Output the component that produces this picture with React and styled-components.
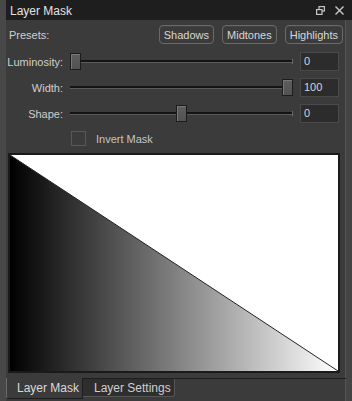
import React from "react";
import styled, { createGlobalStyle } from "styled-components";

const Global = createGlobalStyle`
  html, body { margin: 0; padding: 0; background: #3b3b3b; }
  body { font-family: "Liberation Sans", Arial, sans-serif; font-size: 11px; color: #cfcfcf; }
  * { box-sizing: border-box; }
`;

const Frame = styled.div`
  width: 352px;
  height: 401px;
  display: flex;
  flex-direction: column;
  background: #3b3b3b;
  border-left: 6px solid #484848;
  overflow: hidden;
`;

const TitleBar = styled.div`
  height: 20px;
  flex: none;
  display: flex;
  align-items: center;
  background: #1e1e1e;
  padding: 0 8px 0 4px;
  color: #e2e2e2;
  font-size: 12px;
`;

const Title = styled.div`
  flex: 1;
  padding-top: 1px;
`;

const TitleIcons = styled.div`
  display: flex;
  align-items: center;
  gap: 10px;
  color: #c4c4c4;
`;

const Body = styled.div`
  flex: 1;
  display: flex;
  flex-direction: column;
  border-right: 6px solid #444;
  box-shadow: inset -1px 0 0 #555;
`;

const PresetRow = styled.div`
  display: flex;
  align-items: center;
  height: 19px;
  margin-top: 5px;
  padding: 0 3px 0 3px;
  gap: 8px;
`;

const PresetLabel = styled.div`
  flex: 1;
  padding-top: 1px;
`;

const PresetButton = styled.div`
  height: 19px;
  padding: 0 4px;
  display: flex;
  align-items: center;
  border: 1px solid #6a6a6a;
  border-radius: 4px;
  color: #d8d8d8;
  font-size: 11px;
  box-shadow: inset 0 1px 0 rgba(255,255,255,0.04);
`;

const SliderRow = styled.div`
  display: flex;
  align-items: center;
  height: 19px;
  margin-top: ${(p) => p.$top}px;
  gap: 7px;
  padding-right: 7px;
`;

const RowLabel = styled.div`
  width: 57px;
  text-align: right;
  flex: none;
`;

const Track = styled.div`
  position: relative;
  flex: 1;
  height: 19px;
  &::before {
    content: "";
    position: absolute;
    left: 0;
    right: 0;
    top: 8px;
    height: 2px;
    background: #141414;
    border-bottom: 1px solid #5c5c5c;
    box-sizing: content-box;
  }
  &::after {
    content: "";
    position: absolute;
    right: 0;
    top: 7px;
    width: 1px;
    height: 5px;
    background: #6a6a6a;
  }
`;

const Thumb = styled.div`
  position: absolute;
  top: 1px;
  width: 11px;
  height: 17px;
  background: linear-gradient(#5e5e5e, #525252);
  border: 1px solid #1c1c1c;
  box-shadow: inset 1px 1px 0 #777;
  z-index: 1;
`;

const ValueBox = styled.div`
  width: 39px;
  height: 19px;
  flex: none;
  background: #2c2c2c;
  border: 1px solid #4a4a4a;
  padding: 2px 3px 0;
  color: #d4d4d4;
`;

const CheckRow = styled.div`
  display: flex;
  align-items: center;
  margin-top: 8px;
  padding-left: 65px;
  gap: 10px;
  height: 15px;
  color: #c4c4c4;
`;

const CheckBox = styled.div`
  width: 15px;
  height: 15px;
  border: 1px solid #575757;
  background: #3b3b3b;
`;

const Canvas = styled.div`
  margin: 7px 6px 0 2px;
  height: 220px;
  border: 2px solid #1a1a1a;
  background: #fff;
  display: flex;
`;

const TabBar = styled.div`
  display: flex;
  margin-top: 5px;
  height: 20px;
  border-top: 1px solid #1d1d1d;
`;

const Tab = styled.div`
  display: flex;
  align-items: center;
  font-size: 12px;
  ${(p) =>
    p.$active
      ? `
    width: 77px;
    height: 21px;
    margin-top: -1px;
    padding-left: 10px;
    background: #3b3b3b;
    border-left: 1px solid #6a6a6a;
    border-bottom: 1px solid #1d1d1d;
    border-right: 1px solid #1d1d1d;
    border-bottom-left-radius: 3px;
    color: #dadada;
  `
      : `
    width: 92px;
    height: 18px;
    padding-left: 11px;
    background: #2e2e2e;
    border-right: 1px solid #555;
    border-bottom: 1px solid #555;
    border-bottom-right-radius: 3px;
    color: #cfcfcf;
  `}
`;

function Slider({ pos }) {
  return (
    <Track>
      <Thumb style={{ left: `calc(${pos * 100}% - ${pos * 11}px)` }} />
    </Track>
  );
}

function MaskPreview() {
  return (
    <svg width="100%" height="100%" viewBox="0 0 328 216" preserveAspectRatio="none">
      <defs>
        <linearGradient id="g" x1="0" y1="0" x2="1" y2="0">
          <stop offset="0" stopColor="#000" />
          <stop offset="1" stopColor="#fff" />
        </linearGradient>
      </defs>
      <rect x="0" y="0" width="328" height="216" fill="#fff" />
      <polygon points="0,0 0,216 328,216" fill="url(#g)" />
      <line x1="0" y1="0" x2="328" y2="216" stroke="#222" strokeWidth="1" />
    </svg>
  );
}

export default function App() {
  return (
    <>
      <Global />
      <Frame>
        <TitleBar>
          <Title>Layer Mask</Title>
          <TitleIcons>
            <svg width="9" height="9" viewBox="0 0 9 9" fill="none" stroke="currentColor" strokeWidth="1.2">
              <rect x="3" y="0.6" width="5.4" height="4.4" />
              <rect x="0.6" y="3.6" width="5.4" height="4.8" fill="#1e1e1e" />
            </svg>
            <svg width="9" height="9" viewBox="0 0 9 9" stroke="currentColor" strokeWidth="1.4">
              <line x1="0.5" y1="0.5" x2="8.5" y2="8.5" />
              <line x1="8.5" y1="0.5" x2="0.5" y2="8.5" />
            </svg>
          </TitleIcons>
        </TitleBar>
        <Body>
          <PresetRow>
            <PresetLabel>Presets:</PresetLabel>
            <PresetButton>Shadows</PresetButton>
            <PresetButton>Midtones</PresetButton>
            <PresetButton>Highlights</PresetButton>
          </PresetRow>
          <SliderRow $top={8}>
            <RowLabel>Luminosity:</RowLabel>
            <Slider pos={0} />
            <ValueBox>0</ValueBox>
          </SliderRow>
          <SliderRow $top={7}>
            <RowLabel>Width:</RowLabel>
            <Slider pos={1} />
            <ValueBox>100</ValueBox>
          </SliderRow>
          <SliderRow $top={7}>
            <RowLabel>Shape:</RowLabel>
            <Slider pos={0.5} />
            <ValueBox>0</ValueBox>
          </SliderRow>
          <CheckRow>
            <CheckBox />
            <span>Invert Mask</span>
          </CheckRow>
          <Canvas>
            <MaskPreview />
          </Canvas>
          <TabBar>
            <Tab $active>Layer Mask</Tab>
            <Tab>Layer Settings</Tab>
          </TabBar>
        </Body>
      </Frame>
    </>
  );
}
